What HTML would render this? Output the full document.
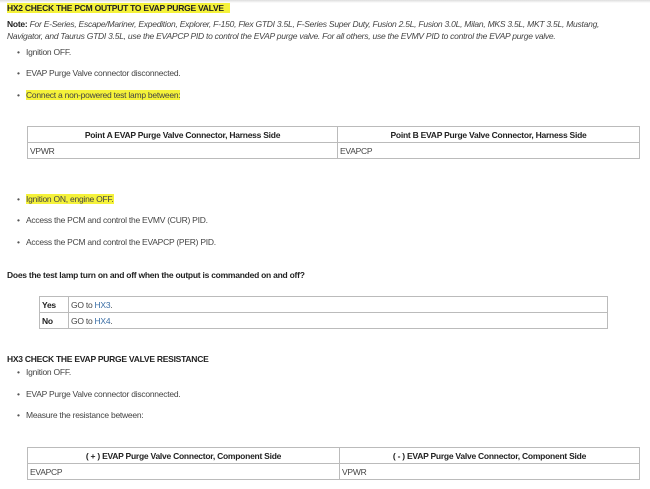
<!DOCTYPE html>
<html><head><meta charset="utf-8"><style>
body{margin:0;width:650px;height:489px;background:#fff;position:relative;overflow:hidden;font-family:"Liberation Sans",sans-serif;color:#444;font-size:8.5px;letter-spacing:-0.25px}
.a{position:absolute;white-space:nowrap;line-height:11px}
.b{font-weight:bold;color:#222}
.hl{background:#f5f23a}
.li:before{content:"•";position:absolute;left:-9px;color:#555}
table{position:absolute;border-collapse:collapse;font-size:8.5px;letter-spacing:-0.25px}
td,th{border:1px solid #bbb;height:15px;padding:0 2px;color:#444}
th{font-weight:bold;color:#222}
a{color:#3a6ea5;text-decoration:none}
</style></head><body>
<div style="position:absolute;left:0;top:0;width:650px;height:3px;background:linear-gradient(#ddd,#fff)"></div>
<div class="a b" style="left:7px;top:3px"><span class="hl">HX2 CHECK THE PCM OUTPUT TO EVAP PURGE VALVE</span><span class="hl">&nbsp;&nbsp;&nbsp;</span></div>
<div class="a" style="left:7px;top:19px"><b style="color:#222">Note:</b> <i>For E-Series, Escape/Mariner, Expedition, Explorer, F-150, Flex GTDI 3.5L, F-Series Super Duty, Fusion 2.5L, Fusion 3.0L, Milan, MKS 3.5L, MKT 3.5L, Mustang,</i></div>
<div class="a" style="left:7px;top:31px"><i>Navigator, and Taurus GTDI 3.5L, use the EVAPCP PID to control the EVAP purge valve. For all others, use the EVMV PID to control the EVAP purge valve.</i></div>
<div class="a li" style="left:26px;top:47px">Ignition OFF.</div>
<div class="a li" style="left:26px;top:68px">EVAP Purge Valve connector disconnected.</div>
<div class="a li" style="left:26px;top:90px"><span class="hl">Connect a non-powered test lamp between:</span></div>
<table style="left:27px;top:126px;width:613px"><tr><th style="width:305px">Point A EVAP Purge Valve Connector, Harness Side</th><th>Point B EVAP Purge Valve Connector, Harness Side</th></tr><tr><td>VPWR</td><td>EVAPCP</td></tr></table>
<div class="a li" style="left:26px;top:194px"><span class="hl">Ignition ON, engine OFF.</span></div>
<div class="a li" style="left:26px;top:215px">Access the PCM and control the EVMV (CUR) PID.</div>
<div class="a li" style="left:26px;top:237px">Access the PCM and control the EVAPCP (PER) PID.</div>
<div class="a b" style="left:7px;top:270px">Does the test lamp turn on and off when the output is commanded on and off?</div>
<table style="left:39px;top:296px;width:569px"><tr><th style="width:24px;text-align:left">Yes</th><td>GO to <a>HX3</a>.</td></tr><tr><th style="text-align:left">No</th><td>GO to <a>HX4</a>.</td></tr></table>
<div class="a b" style="left:7px;top:354px">HX3 CHECK THE EVAP PURGE VALVE RESISTANCE</div>
<div class="a li" style="left:26px;top:367px">Ignition OFF.</div>
<div class="a li" style="left:26px;top:389px">EVAP Purge Valve connector disconnected.</div>
<div class="a li" style="left:26px;top:410px">Measure the resistance between:</div>
<table style="left:27px;top:447px;width:613px"><tr><th style="width:307px">( + ) EVAP Purge Valve Connector, Component Side</th><th>( - ) EVAP Purge Valve Connector, Component Side</th></tr><tr><td>EVAPCP</td><td>VPWR</td></tr></table>
</body></html>
